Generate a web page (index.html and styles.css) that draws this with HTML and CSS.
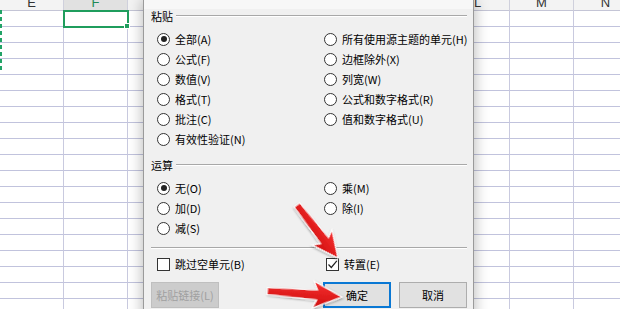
FILE: index.html
```html
<!DOCTYPE html>
<html lang="zh-CN">

<head>
    <meta charset="UTF-8">
    <meta name="viewport" content="width=device-width, initial-scale=1.0">
    <title>选择性粘贴</title>
    <link rel="stylesheet" href="styles.css">
</head>

<body>
    <div class="page">
        <div class="sheet" id="sheet"></div>
        <div class="marquee"></div>

        <div class="dialog">
            <div class="dialog-top"></div>

            <div class="legend"><span>粘贴</span></div>
            <div class="options">
                <label class="opt"><span class="radio on"></span>全部(A)</label>
                <label class="opt"><span class="radio"></span>所有使用源主题的单元(H)</label>
                <label class="opt"><span class="radio"></span>公式(F)</label>
                <label class="opt"><span class="radio"></span>边框除外(X)</label>
                <label class="opt"><span class="radio"></span>数值(V)</label>
                <label class="opt"><span class="radio"></span>列宽(W)</label>
                <label class="opt"><span class="radio"></span>格式(T)</label>
                <label class="opt"><span class="radio"></span>公式和数字格式(R)</label>
                <label class="opt"><span class="radio"></span>批注(C)</label>
                <label class="opt"><span class="radio"></span>值和数字格式(U)</label>
                <label class="opt"><span class="radio"></span>有效性验证(N)</label>
            </div>

            <div class="legend second"><span>运算</span></div>
            <div class="options">
                <label class="opt"><span class="radio on"></span>无(O)</label>
                <label class="opt"><span class="radio"></span>乘(M)</label>
                <label class="opt"><span class="radio"></span>加(D)</label>
                <label class="opt"><span class="radio"></span>除(I)</label>
                <label class="opt"><span class="radio"></span>减(S)</label>
            </div>

            <div class="sep"></div>

            <div class="checks">
                <label class="opt"><span class="check"></span>跳过空单元(B)</label>
                <label class="opt"><span class="check">
                        <svg width="11" height="11" viewBox="0 0 11 11">
                            <path d="M1.5 5.5 L4.3 8.5 L9.8 1.8" fill="none" stroke="#222" stroke-width="1.2" />
                        </svg>
                    </span>转置(E)</label>
            </div>

            <div class="buttons">
                <button class="btn disabled">粘贴链接(L)</button>
                <button class="btn primary">确定</button>
                <button class="btn">取消</button>
            </div>
        </div>

        <svg class="arrows" width="620" height="309" viewBox="0 0 620 309">
            <defs>
                <filter id="shadow" x="-20%" y="-20%" width="140%" height="140%">
                    <feDropShadow dx="1" dy="1" stdDeviation="1" flood-color="#000" flood-opacity="0.35" />
                </filter>
                <linearGradient id="red" x1="0" y1="0" x2="0" y2="1">
                    <stop offset="0" stop-color="#f53030" />
                    <stop offset="1" stop-color="#cf0d0d" />
                </linearGradient>
            </defs>
            <g transform="translate(338 258) rotate(52.3)" filter="url(#shadow)">
                <polygon points="0,0 -26,-12.5 -22,-5 -67,-3.5 -67,3.5 -22,5 -26,12.5" fill="url(#red)" stroke="#fff" stroke-width="1.2" />
            </g>
            <g transform="translate(342 297) rotate(4.6)" filter="url(#shadow)">
                <polygon points="0,0 -29,-13.5 -25,-5 -75,-3.5 -75,3.5 -25,5 -29,13.5" fill="url(#red)" stroke="#fff" stroke-width="1.2" />
            </g>
        </svg>
    </div>

    <script>
        let cols = ["E", "F", "G", "H", "I", "J", "K", "L", "M", "N"]
        let sheet = document.getElementById("sheet")
        for (let c of cols) {
            let h = document.createElement("div")
            h.className = c == "F" ? "head active" : "head"
            h.innerText = c
            sheet.appendChild(h)
        }
        for (let r = 0; r < 19; r++) {
            for (let c = 0; c < cols.length; c++) {
                let cell = document.createElement("div")
                cell.className = (r == 0 && c == 1) ? "cell sel" : "cell"
                sheet.appendChild(cell)
            }
        }
    </script>
</body>

</html>
```

FILE: styles.css
```css
body {
    margin: 0;
    background-color: #fff;
    font-family: "Noto Sans CJK SC", "Liberation Sans", sans-serif;
    overflow: hidden;
}

.page {
    position: relative;
    width: 620px;
    height: 309px;
    overflow: hidden;
}

/* spreadsheet behind the dialog */

.sheet {
    display: grid;
    grid-template-columns: 64px 64px 64px 64px 64px 63px 63px 64px 64px 64px;
    grid-template-rows: 21px;
    grid-auto-rows: 16px;
    margin-top: -10px;
}

.head {
    overflow: hidden;
    background-color: #f3f3f3;
    border-right: 1px solid #cfd0dc;
    border-bottom: 1px solid #c4c5d6;
    font: 13px/25px "Liberation Sans", sans-serif;
    color: #333;
    text-align: center;
}

.head.active {
    background-color: #e1e1e1;
    color: #1f8a55;
}

.cell {
    border-right: 1px solid #c9cadf;
    border-bottom: 1px solid #c1c3dd;
}

.cell.sel {
    position: relative;
    outline: 2px solid #1f9d5d;
    outline-offset: -1px;
    z-index: 1;
}

.cell.sel::after {
    content: "";
    position: absolute;
    right: -3px;
    bottom: -3px;
    width: 4px;
    height: 4px;
    background-color: #1f9d5d;
    border: 1px solid #fff;
}

.marquee {
    position: absolute;
    left: 0;
    top: 10px;
    width: 2px;
    height: 62px;
    background: repeating-linear-gradient(to bottom, #21a366 0 4px, transparent 4px 7px);
}

/* dialog */

.dialog {
    position: absolute;
    left: 143px;
    top: 0;
    width: 331px;
    height: 330px;
    box-sizing: border-box;
    padding: 0 6px 0 7px;
    background-color: #f0f0f0;
    border: 1px solid #9a9a9a;
    border-top: none;
    box-shadow: 0 0 14px rgba(0, 0, 0, 0.3);
    font-size: 11px;
    color: #000;
}

.dialog-top {
    height: 9px;
    margin: 0 -6px 0 -7px;
    background-color: #f7f7f7;
}

.legend {
    display: flex;
    align-items: center;
    height: 14px;
    line-height: 14px;
}

.legend::after {
    content: "";
    flex: 1;
    margin-left: 3px;
    border-top: 1px solid #a8a8a8;
    border-bottom: 1px solid #fff;
}

.legend.second {
    margin-top: 9px;
}

.options {
    display: grid;
    grid-template-columns: 167px 1fr;
    grid-auto-rows: 20px;
    margin-top: 6px;
    padding-left: 6px;
}

.opt {
    display: flex;
    align-items: center;
    gap: 5px;
    white-space: nowrap;
    line-height: 14px;
}

.radio {
    position: relative;
    width: 13px;
    height: 13px;
    box-sizing: border-box;
    border: 1px solid #333;
    border-radius: 50%;
    background-color: #fff;
}

.radio.on::after {
    content: "";
    position: absolute;
    left: 2.5px;
    top: 2.5px;
    width: 6px;
    height: 6px;
    border-radius: 50%;
    background-color: #222;
}

.sep {
    margin-top: 9px;
    border-top: 1px solid #a8a8a8;
    border-bottom: 1px solid #fff;
}

.checks {
    display: grid;
    grid-template-columns: 169px 1fr;
    height: 20px;
    margin-top: 5px;
    padding-left: 6px;
}

.check {
    display: flex;
    align-items: center;
    justify-content: center;
    width: 13px;
    height: 13px;
    box-sizing: border-box;
    border: 1px solid #333;
    background-color: #fff;
}

.buttons {
    display: flex;
    gap: 8px;
    margin-top: 8px;
}

.btn {
    width: 68px;
    height: 26px;
    padding: 0;
    border: 1px solid #adadad;
    background-color: #e1e1e1;
    font-family: "Noto Sans CJK SC", sans-serif;
    font-size: 11px;
    color: #000;
}

.btn.disabled {
    margin-right: auto;
    background-color: #cccccc;
    border-color: #bfbfbf;
    color: #a0a0a0;
}

.btn.primary {
    border: 2px solid #0a78d4;
}

.arrows {
    position: absolute;
    left: 0;
    top: 0;
    pointer-events: none;
}
```
